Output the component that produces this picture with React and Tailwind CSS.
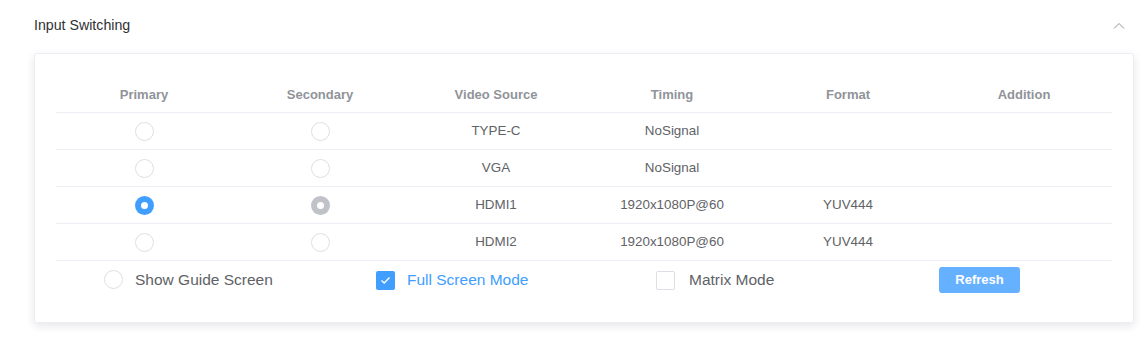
const rows = [
    { source: 'TYPE-C', timing: 'NoSignal', format: '', primary: false, secondary: false },
    { source: 'VGA', timing: 'NoSignal', format: '', primary: false, secondary: false },
    { source: 'HDMI1', timing: '1920x1080P@60', format: 'YUV444', primary: true, secondary: true },
    { source: 'HDMI2', timing: '1920x1080P@60', format: 'YUV444', primary: false, secondary: false },
];

const Radio = ({ checked, muted }) => {
    if (!checked) {
        return <span className="block w-[19px] h-[19px] rounded-full border border-[#dcdfe6] bg-white"></span>;
    }
    return (
        <span className={`flex items-center justify-center w-[19px] h-[19px] rounded-full ${muted ? 'bg-[#bfc2c7]' : 'bg-[#409eff]'}`}>
            <span className="block w-[7px] h-[7px] rounded-full bg-white"></span>
        </span>
    );
};

const Checkbox = ({ checked }) => (
    checked ? (
        <span className="flex items-center justify-center w-[19px] h-[19px] rounded-[2px] bg-[#409eff]">
            <svg width="11" height="9" viewBox="0 0 11 9" fill="none">
                <path d="M1.5 4.5 L4.2 7 L9.5 1.5" stroke="white" strokeWidth="1.4" />
            </svg>
        </span>
    ) : (
        <span className="block w-[19px] h-[19px] rounded-[2px] border border-[#dcdfe6] bg-white"></span>
    )
);

const App = () => {
    return (
        <div className="w-[1147px] h-[342px] bg-white font-['Liberation_Sans',Arial,sans-serif]">
            {/* Section header */}
            <div className="flex justify-between items-start pl-[34px] pr-[22px] pt-[16px] h-[53px]">
                <span className="text-[14.2px] leading-[18px] text-[#303133]">Input Switching</span>
                <svg width="12" height="8" viewBox="0 0 12 8" fill="none" className="mt-[6px]">
                    <path d="M1 6.5 L6 1.5 L11 6.5" stroke="#909399" strokeWidth="1" />
                </svg>
            </div>

            {/* Card */}
            <div className="ml-[34px] w-[1100px] h-[270px] border border-[#ebeef5] rounded-[2px] shadow-[0_3px_10px_0_rgba(0,0,0,0.1)] px-[21px] pt-[23px]">
                <div className="grid grid-cols-6 h-[36px] border-b border-[#ebeef5] items-center text-[13px] font-bold text-[#909399] text-center">
                    <span>Primary</span>
                    <span>Secondary</span>
                    <span>Video Source</span>
                    <span>Timing</span>
                    <span>Format</span>
                    <span>Addition</span>
                </div>
                {rows.map((row, idx) => (
                    <div key={idx} className="grid grid-cols-6 h-[37px] border-b border-[#ebeef5] items-center text-[13.4px] text-[#606266] text-center">
                        <div className="flex justify-center"><Radio checked={row.primary} /></div>
                        <div className="flex justify-center"><Radio checked={row.secondary} muted /></div>
                        <span>{row.source}</span>
                        <span>{row.timing}</span>
                        <span>{row.format}</span>
                        <span></span>
                    </div>
                ))}

                {/* Options row */}
                <div className="flex items-center h-[37px] pl-[48px] text-[15.5px]">
                    <div className="flex items-center w-[272px]">
                        <Radio checked={false} />
                        <span className="ml-[12px] text-[#606266]">Show Guide Screen</span>
                    </div>
                    <div className="flex items-center w-[280px] pt-[1px]">
                        <Checkbox checked />
                        <span className="ml-[12px] text-[#409eff]">Full Screen Mode</span>
                    </div>
                    <div className="flex items-center w-[283px] pt-[1px]">
                        <Checkbox checked={false} />
                        <span className="ml-[14px] text-[#606266]">Matrix Mode</span>
                    </div>
                    <button className="w-[81px] h-[26px] rounded-[3px] bg-[#66b1ff] text-white text-[13px] font-bold">
                        Refresh
                    </button>
                </div>
            </div>
        </div>
    );
};

export default App;
